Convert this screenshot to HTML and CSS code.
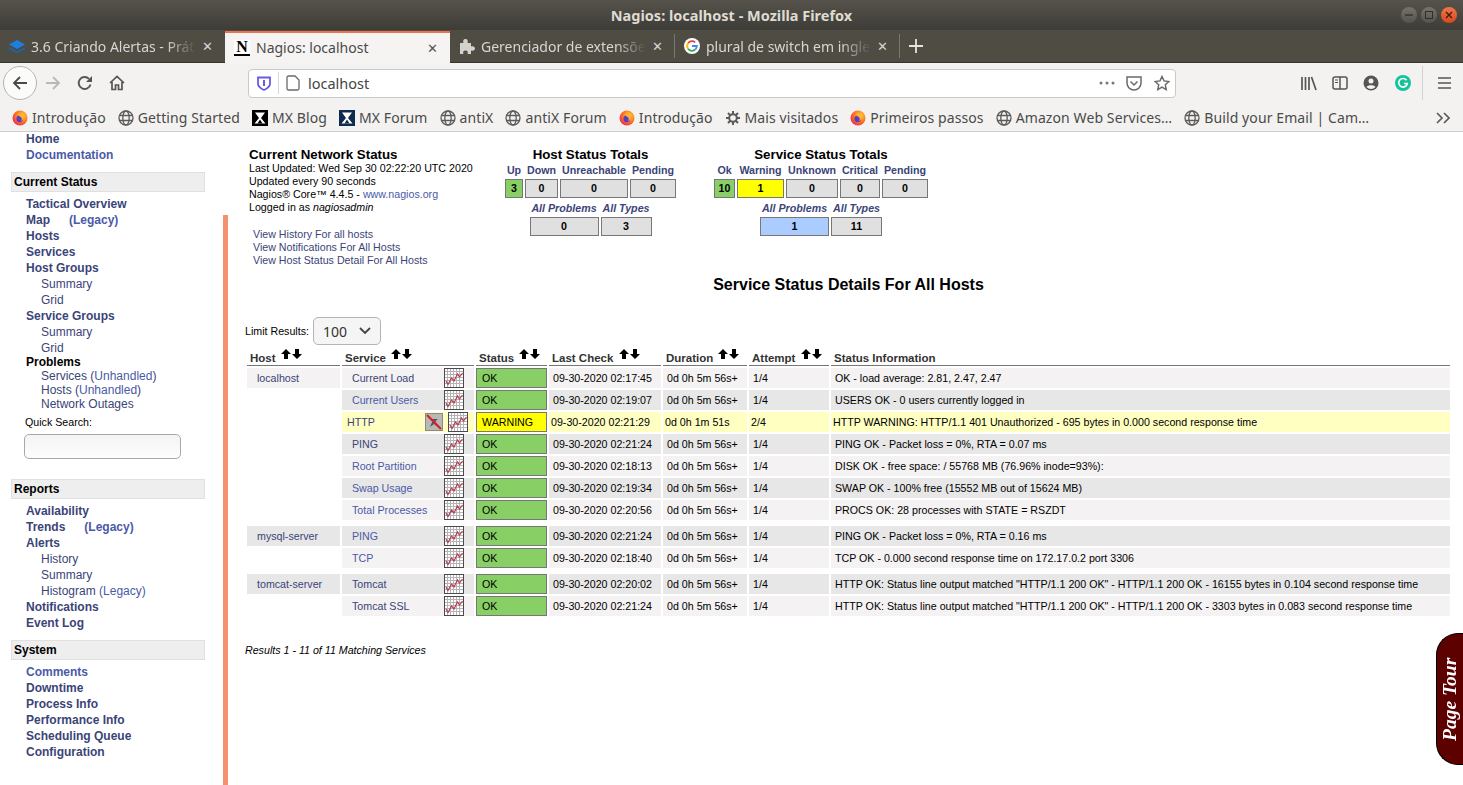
FILE: index.html
```html
<!DOCTYPE html>
<html lang="en">

<head>
    <meta charset="utf-8">
    <meta name="viewport" content="width=device-width, initial-scale=1.0">
    <title>Nagios: localhost</title>
    <link rel="stylesheet" href="styles.css">
</head>

<body>
    <svg class="defs" width="0" height="0">
        <defs>
            <radialGradient id="ffglow" cx="0.65" cy="0.35" r="0.8">
                <stop offset="0" stop-color="#ffd23a" />
                <stop offset="0.5" stop-color="#ff7a1f" />
                <stop offset="1" stop-color="#e2175f" />
            </radialGradient>
            <symbol id="firefox" viewBox="0 0 16 16">
                <circle cx="8" cy="8" r="7.5" fill="url(#ffglow)" />
                <circle cx="7.8" cy="8.8" r="3.4" fill="#5b3cc4" />
                <path d="M6 4c2-1 5 0 5.5 3 .3 2-1 4-3 4.2 1.4-1 1.6-2.5.8-3.5-.8-1-2.3-1.2-3.3-3.7z" fill="#ffb02e" />
            </symbol>
            <symbol id="globe" viewBox="0 0 16 16">
                <g fill="none" stroke="#5b5b5b" stroke-width="1.3">
                    <circle cx="8" cy="8" r="7" />
                    <ellipse cx="8" cy="8" rx="3.2" ry="7" />
                    <path d="M1.5 5.500h13M1.5 10.500h13" />
                </g>
            </symbol>
            <symbol id="mx" viewBox="0 0 16 16">
                <path d="M3 2.500h10L9 8l4.500 5.500H2.500L7 8z" fill="#fff" />
                <path d="M5.500 13.500 8 9.500l2.500 4z" fill="currentColor" />
            </symbol>
            <symbol id="gear" viewBox="0 0 16 16">
                <circle cx="8" cy="8" r="3.8" fill="none" stroke="#5b5b5b" stroke-width="2" />
                <path d="M8 1v3M8 12v3M1 8h3M12 8h3M3 3l2.200 2.200M10.800 10.800 13 13M13 3l-2.200 2.200M5.200 10.800 3 13" stroke="#5b5b5b" stroke-width="2" />
            </symbol>
            <symbol id="graph" viewBox="0 0 20 20">
                <rect x="0.5" y="0.5" width="19" height="19" fill="#fff" stroke="#4a4a4a" />
                <path d="M3.500 1v18M6.500 1v18M9.500 1v18M12.500 1v18M15.500 1v18M1 3.500h18M1 6.500h18M1 9.500h18M1 12.500h18M1 15.500h18" stroke="#b4b4b4" />
                <path d="M2 13l2 3.500L7.500 10l2.500 3 3.500-7 2 3 3-4" fill="none" stroke="#b83a4e" stroke-width="1.2" />
            </symbol>
            <symbol id="sort-up" viewBox="0 0 10 10">
                <path d="M5 0l5 5H7v5H3V5H0z" fill="#000" />
            </symbol>
            <symbol id="sort-down" viewBox="0 0 10 10">
                <path d="M3 0h4v5h3l-5 5-5-5h3z" fill="#000" />
            </symbol>
        </defs>
    </svg>

    <header class="titlebar">
        <span class="titlebar-text">Nagios: localhost - Mozilla Firefox</span>
        <div class="winbtns">
            <span class="winbtn"><svg width="10" height="10" viewBox="0 0 10 10"><path d="M1 5h8" stroke="#2f2e2a" stroke-width="1.3" /></svg></span>
            <span class="winbtn"><svg width="10" height="10" viewBox="0 0 10 10"><rect x="1.5" y="1.5" width="7" height="7" fill="none" stroke="#2f2e2a" /></svg></span>
            <span class="winbtn winbtn-close"><svg width="10" height="10" viewBox="0 0 10 10"><path d="M2 2l6 6M8 2l-6 6" stroke="#3a1a0c" stroke-width="1.3" /></svg></span>
        </div>
    </header>

    <div class="tabbar">
        <div class="tab">
            <svg class="tab-icon" width="16" height="16" viewBox="0 0 16 16">
                <path d="M8 2l8 4.500-8 4.500-8-4.500z" fill="#1c7fe0" />
                <path d="M0 9l8 4.500L16 9v2.300L8 15 0 11.300z" fill="#1565b8" />
            </svg>
            <span class="tab-title">3.6 Criando Alertas - Prát</span>
            <span class="tab-close">✕</span>
        </div>
        <div class="tab tab-active">
            <span class="nagios-fav">N</span>
            <span class="tab-title">Nagios: localhost</span>
            <span class="tab-close">✕</span>
        </div>
        <div class="tab tab-sep">
            <svg class="tab-icon" width="16" height="16" viewBox="0 0 16 16">
                <path d="M1 5h3.500C3.500 2.500 5 1 6.500 1S9.500 2.500 8.500 5H12v3.500c2.500-1 4 .5 4 2s-1.500 3-4 2V16H8.500c1-2.500-.5-3.500-2-3.500s-3 1-2 3.500H1z" fill="#d4d2cc" />
            </svg>
            <span class="tab-title">Gerenciador de extensõe</span>
            <span class="tab-close">✕</span>
        </div>
        <div class="tab tab-sep">
            <svg class="tab-icon" width="16" height="16" viewBox="0 0 16 16">
                <circle cx="8" cy="8" r="8" fill="#fff" />
                <path d="M4.100 5.200A4.800 4.800 0 0 1 11.200 4.400" fill="none" stroke="#ea4335" stroke-width="1.8" />
                <path d="M4.100 10.800A4.800 4.800 0 0 1 4.100 5.200" fill="none" stroke="#fbbc05" stroke-width="1.8" />
                <path d="M11.400 11.400A4.800 4.800 0 0 1 4.100 10.800" fill="none" stroke="#34a853" stroke-width="1.8" />
                <path d="M8 8h4.800a4.800 4.800 0 0 1-1.400 3.400" fill="none" stroke="#4285f4" stroke-width="1.8" />
            </svg>
            <span class="tab-title">plural de switch em ingle</span>
            <span class="tab-close">✕</span>
        </div>
        <svg class="tab-new" width="14" height="14" viewBox="0 0 14 14"><path d="M7 0v14M0 7h14" stroke="#e6e4df" stroke-width="1.8" /></svg>
    </div>

    <div class="toolbar">
        <span class="back-btn">
            <svg width="16" height="16" viewBox="0 0 16 16"><path d="M15 8H2M8 2L2 8l6 6" fill="none" stroke="#4a4a4a" stroke-width="1.8" /></svg>
        </span>
        <svg class="tool-forward" width="16" height="16" viewBox="0 0 16 16"><path d="M1 8h13M8 2l6 6-6 6" fill="none" stroke="#b8b8b8" stroke-width="1.8" /></svg>
        <svg class="tool-reload" width="16" height="16" viewBox="0 0 16 16"><path d="M13.500 9.500A6 6 0 1 1 12 3.800" fill="none" stroke="#555" stroke-width="1.9" /><path d="M15 1v6H9z" fill="#555" /></svg>
        <svg class="tool-home" width="16" height="16" viewBox="0 0 16 16"><path d="M1 8l7-6.500L15 8M3 7v7.500h3.500V10h3v4.500H13V7" fill="none" stroke="#555" stroke-width="1.7" /></svg>
        <div class="urlbar">
            <svg width="14" height="15" viewBox="0 0 14 15"><path d="M1 1.500h12v6c0 3-2.500 5-6 6.500-3.500-1.500-6-3.500-6-6.500z" fill="none" stroke="#6a5ae0" stroke-width="1.8" /><path d="M7 4v6" stroke="#6a5ae0" stroke-width="2" /></svg>
            <span class="url-sep"></span>
            <svg width="14" height="16" viewBox="0 0 14 16"><path d="M1 2.500A1.500 1.500 0 0 1 2.500 1H9l4 4v8.500a1.500 1.500 0 0 1-1.500 1.500h-9A1.500 1.500 0 0 1 1 13.500z" fill="none" stroke="#6a6a6a" stroke-width="1.3" /></svg>
            <span class="url-text">localhost</span>
            <svg class="url-dots" width="16" height="4" viewBox="0 0 16 4"><circle cx="2" cy="2" r="1.5" fill="#777" /><circle cx="8" cy="2" r="1.5" fill="#777" /><circle cx="14" cy="2" r="1.5" fill="#777" /></svg>
            <svg class="url-pocket" width="16" height="15" viewBox="0 0 16 15"><path d="M1 1h14v6a7 7 0 0 1-14 0z" fill="none" stroke="#6a6a6a" stroke-width="1.5" /><path d="M4.500 5.500L8 9l3.500-3.500" fill="none" stroke="#6a6a6a" stroke-width="1.5" /></svg>
            <svg class="url-star" width="16" height="16" viewBox="0 0 16 16"><path d="M8 1.500l2 4.400 4.800.6-3.500 3.300.9 4.800L8 12.200l-4.200 2.400.9-4.800L1.200 6.500 6 5.900z" fill="none" stroke="#6a6a6a" stroke-width="1.5" /></svg>
        </div>
        <svg class="tool-library" width="16" height="15" viewBox="0 0 16 15"><path d="M1 1v13M4.500 1v13M8 1v13M10.500 1l4.500 13" stroke="#555" stroke-width="1.7" fill="none" /></svg>
        <svg class="tool-sidebar" width="16" height="14" viewBox="0 0 16 14"><rect x="1" y="1" width="14" height="12" rx="2" fill="none" stroke="#555" stroke-width="1.5" /><path d="M8 1v12" stroke="#555" stroke-width="1.5" /><path d="M3 4h3M3 6.500h3" stroke="#555" /></svg>
        <svg class="tool-account" width="16" height="16" viewBox="0 0 16 16"><circle cx="8" cy="8" r="7.5" fill="#555" /><circle cx="8" cy="6" r="2.5" fill="#f3f2f0" /><path d="M3.500 12c1-2.500 8-2.500 9 0a6 6 0 0 1-9 0z" fill="#f3f2f0" /></svg>
        <svg class="tool-grammarly" width="16" height="16" viewBox="0 0 16 16"><circle cx="8" cy="8" r="8" fill="#15c39a" /><path d="M11.500 5.200A4.300 4.300 0 1 0 12.300 8.500H9" fill="none" stroke="#fff" stroke-width="1.6" /></svg>
        <span class="tool-sep"></span>
        <svg class="tool-menu" width="13" height="12" viewBox="0 0 13 12"><path d="M0 1h13M0 6h13M0 11h13" stroke="#555" stroke-width="1.7" /></svg>
    </div>

    <nav class="bookmarks">
        <a class="bookmark"><svg width="16" height="16"><use href="#firefox" /></svg>Introdução</a>
        <a class="bookmark"><svg width="16" height="16"><use href="#globe" /></svg>Getting Started</a>
        <a class="bookmark"><span class="mx-box"><svg width="16" height="16"><use href="#mx" /></svg></span>MX Blog</a>
        <a class="bookmark"><span class="mx-box mx-navy"><svg width="16" height="16"><use href="#mx" /></svg></span>MX Forum</a>
        <a class="bookmark"><svg width="16" height="16"><use href="#globe" /></svg>antiX</a>
        <a class="bookmark"><svg width="16" height="16"><use href="#globe" /></svg>antiX Forum</a>
        <a class="bookmark"><svg width="16" height="16"><use href="#firefox" /></svg>Introdução</a>
        <a class="bookmark"><svg width="16" height="16"><use href="#gear" /></svg>Mais visitados</a>
        <a class="bookmark"><svg width="16" height="16"><use href="#firefox" /></svg>Primeiros passos</a>
        <a class="bookmark"><svg width="16" height="16"><use href="#globe" /></svg>Amazon Web Services…</a>
        <a class="bookmark"><svg width="16" height="16"><use href="#globe" /></svg>Build your Email | Cam…</a>
        <svg class="bookmarks-more" width="14" height="12" viewBox="0 0 14 12"><path d="M1 1l5 5-5 5M8 1l5 5-5 5" fill="none" stroke="#5b5b5b" stroke-width="1.7" /></svg>
    </nav>

    <div class="page">
        <aside class="side">
            <ul class="side-list side-first">
                <li class="strong"><a>Home</a></li>
                <li class="strong"><a class="fresh">Documentation</a></li>
            </ul>

            <h3 class="side-head">Current Status</h3>
            <ul class="side-list">
                <li class="strong"><a>Tactical Overview</a></li>
                <li class="strong"><a>Map</a><a class="fresh legacy">(Legacy)</a></li>
                <li class="strong"><a>Hosts</a></li>
                <li class="strong"><a>Services</a></li>
                <li class="strong"><a>Host Groups</a></li>
                <li class="sub"><a>Summary</a></li>
                <li class="sub"><a>Grid</a></li>
                <li class="strong"><a>Service Groups</a></li>
                <li class="sub"><a>Summary</a></li>
                <li class="sub"><a>Grid</a></li>
                <li class="strong tight tight-first">Problems</li>
                <li class="sub tight"><a>Services</a> <span class="paren">(<a class="fresh">Unhandled</a>)</span></li>
                <li class="sub tight"><a>Hosts</a> <span class="paren">(<a class="fresh">Unhandled</a>)</span></li>
                <li class="sub tight"><a>Network Outages</a></li>
            </ul>
            <label class="quick-label" for="quick">Quick Search:</label>
            <input class="quick-input" id="quick" type="text">

            <h3 class="side-head side-head-reports">Reports</h3>
            <ul class="side-list">
                <li class="strong"><a>Availability</a></li>
                <li class="strong"><a>Trends</a><a class="fresh legacy">(Legacy)</a></li>
                <li class="strong"><a>Alerts</a></li>
                <li class="sub"><a>History</a></li>
                <li class="sub"><a>Summary</a></li>
                <li class="sub"><a>Histogram</a> <a class="fresh">(Legacy)</a></li>
                <li class="strong"><a>Notifications</a></li>
                <li class="strong"><a>Event Log</a></li>
            </ul>

            <h3 class="side-head">System</h3>
            <ul class="side-list">
                <li class="strong"><a class="fresh">Comments</a></li>
                <li class="strong"><a>Downtime</a></li>
                <li class="strong"><a>Process Info</a></li>
                <li class="strong"><a>Performance Info</a></li>
                <li class="strong"><a>Scheduling Queue</a></li>
                <li class="strong"><a>Configuration</a></li>
            </ul>
        </aside>

        <div class="frame-rule"></div>

        <main class="main">
            <section class="overview">
                <div class="netinfo">
                    <h2 class="block-title">Current Network Status</h2>
                    <p>Last Updated: Wed Sep 30 02:22:20 UTC 2020</p>
                    <p>Updated every 90 seconds</p>
                    <p>Nagios® Core™ 4.4.5 - <a class="fresh">www.nagios.org</a></p>
                    <p>Logged in as <i>nagiosadmin</i></p>
                    <ul class="netlinks">
                        <li><a>View History For all hosts</a></li>
                        <li><a>View Notifications For All Hosts</a></li>
                        <li><a>View Host Status Detail For All Hosts</a></li>
                    </ul>
                </div>

                <div class="totals totals-host">
                    <h2 class="block-title">Host Status Totals</h2>
                    <div class="totals-grid host-main">
                        <a class="total-label">Up</a><a class="total-label">Down</a><a class="total-label">Unreachable</a><a class="total-label">Pending</a>
                        <span class="total-cell cell-ok">3</span><span class="total-cell">0</span><span class="total-cell">0</span><span class="total-cell">0</span>
                    </div>
                    <div class="totals-grid totals-sub host-sub">
                        <a class="total-label">All Problems</a><a class="total-label">All Types</a>
                        <span class="total-cell">0</span><span class="total-cell">3</span>
                    </div>
                </div>

                <div class="totals totals-service">
                    <h2 class="block-title">Service Status Totals</h2>
                    <div class="totals-grid service-main">
                        <a class="total-label">Ok</a><a class="total-label">Warning</a><a class="total-label">Unknown</a><a class="total-label">Critical</a><a class="total-label">Pending</a>
                        <span class="total-cell cell-ok">10</span><span class="total-cell cell-warn">1</span><span class="total-cell">0</span><span class="total-cell">0</span><span class="total-cell">0</span>
                    </div>
                    <div class="totals-grid totals-sub service-sub">
                        <a class="total-label">All Problems</a><a class="total-label">All Types</a>
                        <span class="total-cell cell-problem">1</span><span class="total-cell">11</span>
                    </div>
                </div>
            </section>

            <h1 class="details-title">Service Status Details For All Hosts</h1>

            <div class="limit">
                <span>Limit Results:</span>
                <span class="limit-select">100
                    <svg width="12" height="8" viewBox="0 0 12 8"><path d="M1 1l5 5 5-5" fill="none" stroke="#444" stroke-width="1.8" /></svg>
                </span>
            </div>

            <table class="status">
                <colgroup>
                    <col class="c-host"><col class="c-service"><col class="c-state"><col class="c-check"><col class="c-dur"><col class="c-att"><col class="c-info">
                </colgroup>
                <thead>
                    <tr>
                        <th>Host <span class="sort"><svg width="10" height="10"><use href="#sort-up" /></svg><svg width="10" height="10"><use href="#sort-down" /></svg></span></th>
                        <th>Service <span class="sort"><svg width="10" height="10"><use href="#sort-up" /></svg><svg width="10" height="10"><use href="#sort-down" /></svg></span></th>
                        <th>Status <span class="sort"><svg width="10" height="10"><use href="#sort-up" /></svg><svg width="10" height="10"><use href="#sort-down" /></svg></span></th>
                        <th>Last Check <span class="sort"><svg width="10" height="10"><use href="#sort-up" /></svg><svg width="10" height="10"><use href="#sort-down" /></svg></span></th>
                        <th>Duration <span class="sort"><svg width="10" height="10"><use href="#sort-up" /></svg><svg width="10" height="10"><use href="#sort-down" /></svg></span></th>
                        <th>Attempt <span class="sort"><svg width="10" height="10"><use href="#sort-up" /></svg><svg width="10" height="10"><use href="#sort-down" /></svg></span></th>
                        <th>Status Information</th>
                    </tr>
                </thead>
                <tbody>
                    <tr class="odd">
                        <td class="host"><a>localhost</a></td>
                        <td><div class="svc"><a>Current Load</a><svg width="20" height="20"><use href="#graph" /></svg></div></td>
                        <td class="state state-ok">OK</td><td>09-30-2020 02:17:45</td><td>0d 0h 5m 56s+</td><td>1/4</td><td>OK - load average: 2.81, 2.47, 2.47</td>
                    </tr>
                    <tr class="even">
                        <td class="blank"></td>
                        <td><div class="svc"><a class="fresh">Current Users</a><svg width="20" height="20"><use href="#graph" /></svg></div></td>
                        <td class="state state-ok">OK</td><td>09-30-2020 02:19:07</td><td>0d 0h 5m 56s+</td><td>1/4</td><td>USERS OK - 0 users currently logged in</td>
                    </tr>
                    <tr class="warn">
                        <td class="blank"></td>
                        <td><div class="svc"><a>HTTP</a>
                            <svg class="mute" width="18" height="18" viewBox="0 0 18 18">
                                <rect x="0.5" y="0.5" width="17" height="17" fill="#b8b8b8" stroke="#8a8a8a" />
                                <path d="M5 14l2.500-6L5 6h8l-2.500 2L13 14l-4-3z" fill="#555" />
                                <path d="M2 2l14 14" stroke="#d8202a" stroke-width="2.2" />
                            </svg>
                            <svg width="20" height="20"><use href="#graph" /></svg></div></td>
                        <td class="state state-warn">WARNING</td><td>09-30-2020 02:21:29</td><td>0d 0h 1m 51s</td><td>2/4</td><td>HTTP WARNING: HTTP/1.1 401 Unauthorized - 695 bytes in 0.000 second response time</td>
                    </tr>
                    <tr class="even">
                        <td class="blank"></td>
                        <td><div class="svc"><a>PING</a><svg width="20" height="20"><use href="#graph" /></svg></div></td>
                        <td class="state state-ok">OK</td><td>09-30-2020 02:21:24</td><td>0d 0h 5m 56s+</td><td>1/4</td><td>PING OK - Packet loss = 0%, RTA = 0.07 ms</td>
                    </tr>
                    <tr class="odd">
                        <td class="blank"></td>
                        <td><div class="svc"><a class="fresh">Root Partition</a><svg width="20" height="20"><use href="#graph" /></svg></div></td>
                        <td class="state state-ok">OK</td><td>09-30-2020 02:18:13</td><td>0d 0h 5m 56s+</td><td>1/4</td><td>DISK OK - free space: / 55768 MB (76.96% inode=93%):</td>
                    </tr>
                    <tr class="even">
                        <td class="blank"></td>
                        <td><div class="svc"><a class="fresh">Swap Usage</a><svg width="20" height="20"><use href="#graph" /></svg></div></td>
                        <td class="state state-ok">OK</td><td>09-30-2020 02:19:34</td><td>0d 0h 5m 56s+</td><td>1/4</td><td>SWAP OK - 100% free (15552 MB out of 15624 MB)</td>
                    </tr>
                    <tr class="odd">
                        <td class="blank"></td>
                        <td><div class="svc"><a class="fresh">Total Processes</a><svg width="20" height="20"><use href="#graph" /></svg></div></td>
                        <td class="state state-ok">OK</td><td>09-30-2020 02:20:56</td><td>0d 0h 5m 56s+</td><td>1/4</td><td>PROCS OK: 28 processes with STATE = RSZDT</td>
                    </tr>
                    <tr class="spacer"><td colspan="7"></td></tr>
                    <tr class="even">
                        <td class="host"><a>mysql-server</a></td>
                        <td><div class="svc"><a class="fresh">PING</a><svg width="20" height="20"><use href="#graph" /></svg></div></td>
                        <td class="state state-ok">OK</td><td>09-30-2020 02:21:24</td><td>0d 0h 5m 56s+</td><td>1/4</td><td>PING OK - Packet loss = 0%, RTA = 0.16 ms</td>
                    </tr>
                    <tr class="odd">
                        <td class="blank"></td>
                        <td><div class="svc"><a class="fresh">TCP</a><svg width="20" height="20"><use href="#graph" /></svg></div></td>
                        <td class="state state-ok">OK</td><td>09-30-2020 02:18:40</td><td>0d 0h 5m 56s+</td><td>1/4</td><td>TCP OK - 0.000 second response time on 172.17.0.2 port 3306</td>
                    </tr>
                    <tr class="spacer"><td colspan="7"></td></tr>
                    <tr class="even">
                        <td class="host"><a>tomcat-server</a></td>
                        <td><div class="svc"><a>Tomcat</a><svg width="20" height="20"><use href="#graph" /></svg></div></td>
                        <td class="state state-ok">OK</td><td>09-30-2020 02:20:02</td><td>0d 0h 5m 56s+</td><td>1/4</td><td>HTTP OK: Status line output matched "HTTP/1.1 200 OK" - HTTP/1.1 200 OK - 16155 bytes in 0.104 second response time</td>
                    </tr>
                    <tr class="odd">
                        <td class="blank"></td>
                        <td><div class="svc"><a>Tomcat SSL</a><svg width="20" height="20"><use href="#graph" /></svg></div></td>
                        <td class="state state-ok">OK</td><td>09-30-2020 02:21:24</td><td>0d 0h 5m 56s+</td><td>1/4</td><td>HTTP OK: Status line output matched "HTTP/1.1 200 OK" - HTTP/1.1 200 OK - 3303 bytes in 0.083 second response time</td>
                    </tr>
                </tbody>
            </table>

            <p class="results">Results 1 - 11 of 11 Matching Services</p>
        </main>

        <a class="page-tour">Page Tour</a>
    </div>
</body>

</html>
```

FILE: styles.css
```css
* {
    margin: 0;
    padding: 0;
    box-sizing: border-box;
}

html,
body {
    height: 785px;
    overflow: hidden;
}

body {
    display: flex;
    flex-direction: column;
    background-color: #ffffff;
    font-family: "Liberation Sans", Arial, sans-serif;
    color: #000000;
}

a {
    color: #3b4478;
}

a.fresh {
    color: #4a5aa8;
}

ul {
    list-style: none;
}

.defs {
    position: absolute;
}

/* browser chrome */

.titlebar {
    position: relative;
    flex: none;
    height: 30px;
    display: flex;
    align-items: center;
    justify-content: center;
    background: linear-gradient(#55534b, #3d3c37);
    font-family: "Noto Sans", sans-serif;
    font-size: 14.5px;
    font-weight: 700;
    color: #dfdbd2;
}

.winbtns {
    position: absolute;
    top: 7px;
    right: 6px;
    display: flex;
    gap: 4px;
}

.winbtn {
    width: 16px;
    height: 16px;
    border-radius: 50%;
    display: flex;
    align-items: center;
    justify-content: center;
    background: linear-gradient(#75736c, #55534d);
}

.winbtn-close {
    background: linear-gradient(#f0764a, #d8481c);
}

.tabbar {
    flex: none;
    height: 33px;
    display: flex;
    align-items: center;
    background-color: #4f4c44;
    border-bottom: 1px solid #35342f;
    font-family: "Noto Sans", sans-serif;
    font-size: 14px;
    color: #d8d6d0;
}

.tab {
    position: relative;
    width: 225px;
    height: 32px;
    flex: none;
    display: flex;
    align-items: center;
    padding-left: 9px;
}

.tab-sep::after {
    content: "";
    position: absolute;
    right: 0;
    top: 4px;
    bottom: 4px;
    width: 1px;
    background-color: #7a776f;
}

.tab-active {
    background-color: #f5f4f2;
    border-top: 2px solid #e9754a;
    color: #4a4a4a;
    margin-top: 1px;
}

.tab-icon,
.nagios-fav {
    flex: none;
    width: 16px;
    height: 16px;
}

.nagios-fav {
    background-color: #ffffff;
    border-bottom: 2px solid #000000;
    font-family: "Liberation Serif", serif;
    font-size: 16px;
    font-weight: 700;
    line-height: 14px;
    text-align: center;
    color: #000000;
}

.tab-title {
    margin-left: 6px;
    width: 165px;
    white-space: nowrap;
    overflow: hidden;
    -webkit-mask-image: linear-gradient(to right, #000 82%, transparent);
    mask-image: linear-gradient(to right, #000 82%, transparent);
}

.tab-active .tab-title {
    -webkit-mask-image: none;
    mask-image: none;
}

.tab-close {
    margin-left: 4px;
    width: 14px;
    font-size: 13px;
    text-align: center;
    color: #d8d6d0;
}

.tab-active .tab-close {
    color: #555555;
}

.tab-new {
    margin-left: 9px;
}

.toolbar {
    flex: none;
    height: 42px;
    display: flex;
    align-items: center;
    padding-bottom: 2px;
    background-color: #f3f2f0;
}

.back-btn {
    width: 34px;
    height: 34px;
    margin-left: 3px;
    border: 1px solid #b5b5b5;
    border-radius: 50%;
    background-color: #fbfbfa;
    display: flex;
    align-items: center;
    justify-content: center;
}

.tool-forward {
    margin-left: 8px;
}

.tool-reload {
    margin-left: 16px;
}

.tool-home {
    margin-left: 16px;
}

.urlbar {
    width: 928px;
    height: 29px;
    margin-left: 123px;
    flex: none;
    display: flex;
    align-items: center;
    padding-left: 8px;
    background-color: #ffffff;
    border: 1px solid #c9c9c7;
    border-radius: 4px;
    font-family: "Noto Sans", sans-serif;
    font-size: 14.5px;
    color: #444444;
}

.url-sep {
    width: 1px;
    height: 22px;
    margin: 0 7px;
    background-color: #d8d8d6;
}

.url-text {
    margin-left: 8px;
    flex: 1;
}

.url-dots {
    margin-right: 11px;
}

.url-pocket {
    margin-right: 12px;
}

.url-star {
    margin-right: 5px;
}

.tool-library {
    margin-left: 125px;
}

.tool-sidebar {
    margin-left: 15px;
}

.tool-account {
    margin-left: 15px;
}

.tool-grammarly {
    margin-left: 16px;
}

.tool-sep {
    width: 1px;
    height: 34px;
    margin-left: 11px;
    background-color: #d3d2cf;
}

.tool-menu {
    margin-left: 15px;
}

.bookmarks {
    flex: none;
    height: 27px;
    display: flex;
    align-items: center;
    gap: 12px;
    padding: 0 13px 1px 12px;
    background-color: #f3f2f0;
    border-bottom: 1px solid #cfcecb;
    font-family: "Noto Sans", sans-serif;
    font-size: 14px;
    letter-spacing: 0.1px;
    color: #4a4a4a;
}

.bookmark {
    display: flex;
    align-items: center;
    gap: 4px;
    color: #4a4a4a;
    white-space: nowrap;
}

.mx-box {
    width: 16px;
    height: 16px;
    display: block;
    background-color: #000000;
    color: #000000;
}

.mx-navy {
    background-color: #0e2a4e;
    color: #0e2a4e;
}

.bookmarks-more {
    margin-left: auto;
}

/* nagios side menu */

.page {
    position: relative;
    flex: 1;
    min-height: 0;
    display: flex;
}

.side {
    flex: none;
    width: 223px;
    font-size: 12px;
}

.side-first {
    margin-top: -1px;
}

.side-head {
    width: 194px;
    height: 20px;
    margin: 9px 0 4px 11px;
    padding-left: 2px;
    background-color: #eeeeee;
    border: 1px solid #e0e0e0;
    font-size: 12px;
    font-weight: 700;
    line-height: 18px;
}

.side-head-reports {
    margin-top: 20px;
}

.side-list li {
    line-height: 16px;
    padding-left: 26px;
}

.side-list .strong {
    font-weight: 700;
}

.side-list .sub {
    padding-left: 41px;
}

.side-list .tight {
    line-height: 14px;
}

.side-list .tight-first {
    margin-top: -1px;
}

.legacy {
    margin-left: 19px;
}

.paren {
    color: #3b4478;
}

.quick-label {
    display: block;
    margin: 4px 0 0 25px;
    font-size: 10.667px;
    line-height: 14px;
}

.quick-input {
    display: block;
    width: 157px;
    height: 25px;
    margin: 5px 0 0 24px;
    background: linear-gradient(#f4f4f4, #fdfdfd);
    border: 1px solid #a8a8a8;
    border-radius: 5px;
}

.frame-rule {
    flex: none;
    width: 5px;
    margin-top: 83px;
    background-color: #f49270;
}

/* nagios main frame */

.main {
    flex: 1;
    min-width: 0;
    padding: 16px 0 0 17px;
    font-size: 10.667px;
}

.overview {
    display: flex;
    margin-left: 4px;
}

.netinfo {
    width: 256px;
    line-height: 13px;
}

.block-title {
    font-size: 13.3px;
    font-weight: 700;
    line-height: 14px;
    white-space: nowrap;
}

.netlinks {
    margin: 14px 0 0 4px;
}

.totals {
    display: flex;
    flex-direction: column;
    align-items: center;
    text-align: center;
}

.totals-service {
    margin-left: 38px;
}

.totals-grid {
    display: grid;
    grid-template-rows: 14px 19px;
    column-gap: 2px;
    row-gap: 2px;
    margin-top: 1px;
}

.totals-sub {
    margin-top: 3px;
}

.host-main {
    grid-template-columns: 18px 33px 68px 46px;
}

.host-sub {
    grid-template-columns: 69px 51px;
}

.service-main {
    grid-template-columns: 21px 47px 52px 40px 46px;
}

.service-sub {
    grid-template-columns: 69px 51px;
}

.total-label {
    font-weight: 700;
    line-height: 14px;
    white-space: nowrap;
    display: flex;
    justify-content: center;
}

.totals-sub .total-label {
    font-style: italic;
}

.total-cell {
    background-color: #e0e0e0;
    border: 1px solid #777777;
    font-weight: 700;
    line-height: 17px;
}

.cell-ok {
    background-color: #88d066;
}

.cell-warn {
    background-color: #ffff00;
}

.cell-problem {
    background-color: #aaccff;
}

.details-title {
    width: 1207px;
    margin-top: 8px;
    font-size: 16px;
    font-weight: 700;
    line-height: 20px;
    text-align: center;
}

.limit {
    display: flex;
    align-items: center;
    gap: 4px;
    margin-top: 22px;
}

.limit-select {
    width: 68px;
    height: 28px;
    display: flex;
    align-items: center;
    justify-content: space-between;
    padding: 0 9px;
    background-color: #f5f5f5;
    border: 1px solid #b4b4b4;
    border-radius: 5px;
    font-family: "Noto Sans", sans-serif;
    font-size: 14px;
    color: #333333;
}

.status {
    width: 1207px;
    margin-top: 2px;
    table-layout: fixed;
    border-collapse: separate;
    border-spacing: 2px;
}

.c-host {
    width: 93px;
}

.c-service {
    width: 132px;
}

.c-state {
    width: 71px;
}

.c-check {
    width: 112px;
}

.c-dur {
    width: 84px;
}

.c-att {
    width: 80px;
}

.status th {
    height: 17px;
    padding: 0 3px;
    border-bottom: 1px solid #777777;
    font-size: 11.5px;
    font-weight: 700;
    line-height: 13px;
    text-align: left;
    vertical-align: bottom;
    white-space: nowrap;
    color: #333333;
}

.sort {
    display: inline-flex;
    gap: 1px;
    margin-left: 2px;
    vertical-align: 3px;
}

.status td {
    height: 20px;
    padding: 0 4px;
    white-space: nowrap;
}

.status .odd td {
    background-color: #f4f2f2;
}

.status .even td {
    background-color: #e7e7e7;
}

.status .warn td {
    background-color: #feffc0;
    padding: 0 2px;
}

.status .spacer td {
    height: 2px;
    padding: 0;
    background: none;
}

.status tr .host {
    padding-left: 10px;
}

.status tr .blank,
.status .warn .blank {
    background: none;
}

.svc {
    display: flex;
    align-items: center;
    height: 20px;
    padding: 0 6px;
}

.warn .svc {
    padding: 0 4px 0 3px;
}

.svc a {
    flex: 1;
}

.mute {
    margin-right: 5px;
}

.status tr td.state {
    padding-left: 5px;
    border: 1px solid #777777;
}

.status tr td.state-ok {
    background-color: #88d066;
}

.status tr td.state-warn {
    background-color: #ffff00;
}

.results {
    margin-top: 26px;
    font-style: italic;
}

.page-tour {
    position: absolute;
    right: 0;
    top: 501px;
    width: 27px;
    height: 132px;
    display: flex;
    align-items: center;
    justify-content: center;
    background-color: #5c0000;
    border: 1px solid #000000;
    border-left: 0;
    border-radius: 0 22px 22px 0;
    font-family: "Liberation Serif", serif;
    font-size: 19.5px;
    font-style: italic;
    font-weight: 700;
    color: #ffffff;
    writing-mode: vertical-rl;
    transform: rotate(180deg);
    transform-origin: center;
}
```
